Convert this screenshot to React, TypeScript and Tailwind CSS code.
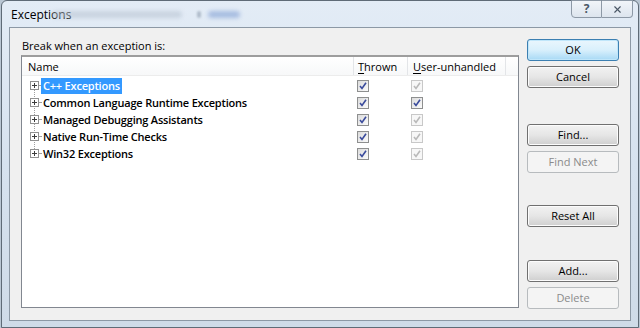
import { X } from "lucide-react";

const font = { fontFamily: '"Open Sans", "Liberation Sans", sans-serif' };

interface Row {
  name: string;
  thrown: boolean;
  userEnabled: boolean;
}

const rows: Row[] = [
  { name: "C++ Exceptions", thrown: true, userEnabled: false },
  { name: "Common Language Runtime Exceptions", thrown: true, userEnabled: true },
  { name: "Managed Debugging Assistants", thrown: true, userEnabled: false },
  { name: "Native Run-Time Checks", thrown: true, userEnabled: false },
  { name: "Win32 Exceptions", thrown: true, userEnabled: false },
];

function Check(props: { disabled?: boolean }) {
  const { disabled } = props;
  return (
    <div
      className={`w-[12px] h-[12px] border flex items-center justify-center ${
        disabled
          ? "border-[#c8c8c8] bg-[#f7f7f7]"
          : "border-[#8e8f8f] bg-gradient-to-br from-[#dcdcdc] to-[#fbfbfb]"
      }`}
    >
      <svg width="8" height="8" viewBox="0 0 8 8">
        <path
          d="M1 4 L3 6.5 L7 0.8"
          fill="none"
          stroke={disabled ? "#b9b9b9" : "#3a4b9c"}
          strokeWidth="1.6"
        />
      </svg>
    </div>
  );
}

function PlusBox() {
  return (
    <div className="w-[9px] h-[9px] border border-[#919191] bg-white flex items-center justify-center relative">
      <div className="absolute w-[5px] h-px bg-[#3d3d3d]" />
      <div className="absolute w-px h-[5px] bg-[#3d3d3d]" />
    </div>
  );
}

function Button(props: { label: string; variant?: "default" | "disabled" | "primary"; className?: string }) {
  const { label, variant = "default", className = "" } = props;
  const styles =
    variant === "primary"
      ? "border-[#3c7fb1] bg-gradient-to-b from-[#eaf6fd] via-[#d9f0fc] to-[#a7d9f5] text-black shadow-[inset_0_0_0_1px_#c0e6fa]"
      : variant === "disabled"
        ? "border-[#b7bbbe] bg-[#f4f4f4] text-[#8b8b8b]"
        : "border-[#707070] bg-gradient-to-b from-[#f2f2f2] via-[#e6e6e6] to-[#cfcfcf] text-black shadow-[inset_0_0_0_1px_#fcfcfc]";
  return (
    <div
      className={`w-[92px] h-[22px] rounded-[3px] border flex items-center justify-center text-[11px] ${styles} ${className}`}
    >
      {label}
    </div>
  );
}

export default function App() {
  return (
    <div style={font} className="w-[640px] h-[328px] bg-[#b9c6d3] overflow-hidden text-black">
      <div className="w-[638px] h-[328px] ml-px rounded-t-[6px] border border-[#5f6b77] bg-gradient-to-b from-[#e3ecf6] via-[#d6e2ef] to-[#cfdbe8] flex flex-col">
        {/* title bar */}
        <div className="h-[26px] flex items-start justify-between relative">
          <div className="pl-[9px] pt-[6px] text-[12px] leading-[15px]">Exceptions</div>
          <div className="absolute left-[50px] top-[10px] w-[130px] h-[7px] rounded bg-[#b8c4d2] blur-[2px] opacity-60" />
          <div className="absolute left-[195px] top-[10px] w-[4px] h-[7px] rounded bg-[#9aa8b8] blur-[1px] opacity-70" />
          <div className="absolute left-[206px] top-[10px] w-[32px] h-[7px] rounded bg-[#8ea9d8] blur-[2px] opacity-70" />
          <div className="flex mr-[5px] -mt-px">
            <div className="w-[31px] h-[18px] border border-[#8d99a6] rounded-bl-[4px] bg-gradient-to-b from-[#f1f5f9] to-[#dde5ee] flex items-center justify-center text-[12px] leading-none text-[#4a5766] font-bold">
              ?
            </div>
            <div className="w-[31px] h-[18px] border border-l-0 border-[#8d99a6] rounded-br-[4px] bg-gradient-to-b from-[#f1f5f9] to-[#dde5ee] flex items-center justify-center">
              <X className="w-[11px] h-[11px] text-[#4a5766]" strokeWidth={2.5} />
            </div>
          </div>
        </div>

        {/* client area */}
        <div className="mx-[7px] mb-[6px] flex-1 border border-[#8c98a5] bg-[#f0f0f0] flex">
          <div className="pl-[11px] pt-[10px] flex flex-col">
            <div className="text-[11px] leading-[16px] pl-px">Break when an exception is:</div>
            <div className="mt-px w-[498px] h-[253px] border border-[#828790] border-t-2 border-t-[#9d9d9d] bg-white">
              {/* header */}
              <div className="h-[19px] flex text-[11px] leading-[19px] border-b border-[#ececec] bg-gradient-to-b from-white to-[#f7f8f9]">
                <div className="w-[332px] pl-[6px] border-r border-[#e3e5e8]">Name</div>
                <div className="w-[54px] pl-[4px] border-r border-[#e3e5e8]">
                  <span className="underline underline-offset-2">T</span>hrown
                </div>
                <div className="w-[98px] pl-[5px] border-r border-[#e3e5e8]">
                  <span className="underline underline-offset-2">U</span>ser-unhandled
                </div>
              </div>
              {/* rows */}
              <div className="pt-px relative">
                <div className="absolute left-[12px] top-[9px] h-[68px] border-l border-dotted border-[#a0a0a0]" />
                {rows.map((row, i) => (
                  <div key={row.name} className="h-[17px] flex items-center">
                    <div className="w-[332px] flex items-center pl-[8px]">
                      <div className="relative z-10">
                        <PlusBox />
                      </div>
                      <div className="w-[2px] border-t border-dotted border-[#a0a0a0]" />
                      <div
                        className={`px-[2px] h-[16px] leading-[16px] text-[11px] font-semibold tracking-[-0.2px] ${
                          i === 0 ? "bg-[#3399ff] text-white" : ""
                        }`}
                      >
                        {row.name}
                      </div>
                    </div>
                    <div className="w-[54px] pl-[3px]">
                      <Check />
                    </div>
                    <div className="pl-[3px]">
                      <Check disabled={!row.userEnabled} />
                    </div>
                  </div>
                ))}
              </div>
            </div>
          </div>

          {/* buttons */}
          <div className="ml-[8px] pt-[11px] flex flex-col">
            <Button label="OK" variant="primary" />
            <Button label="Cancel" className="mt-[5px]" />
            <Button label="Find..." className="mt-[36px]" />
            <Button label="Find Next" variant="disabled" className="mt-[5px]" />
            <Button label="Reset All" className="mt-[32px]" />
            <Button label="Add..." className="mt-[33px]" />
            <Button label="Delete" variant="disabled" className="mt-[5px]" />
          </div>
        </div>
      </div>
    </div>
  );
}
